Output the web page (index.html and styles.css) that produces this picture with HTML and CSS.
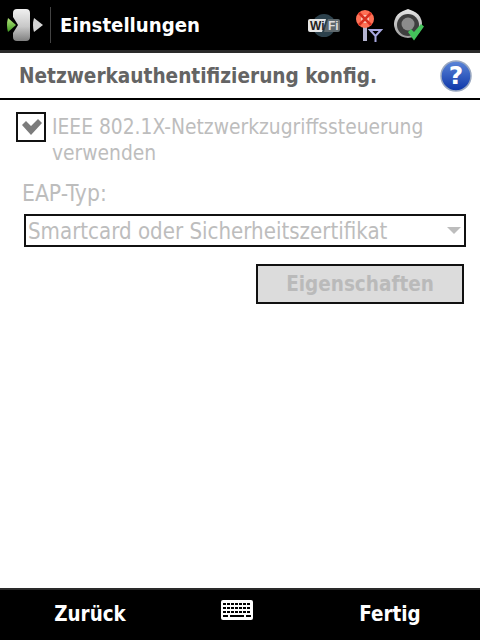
FILE: index.html
```html
<!DOCTYPE html>
<html lang="de">
<head>
<meta charset="utf-8">
<title>Einstellungen</title>
<link rel="stylesheet" href="styles.css">
</head>
<body>
<div class="screen">
  <header class="topbar">
    <svg class="start" width="50" height="50" viewBox="0 0 50 50">
      <defs>
        <linearGradient id="body" x1="0" y1="0" x2="0" y2="1"><stop offset="0" stop-color="#f0f0f0"/><stop offset=".55" stop-color="#c8c8c8"/><stop offset="1" stop-color="#808080"/></linearGradient>
        <linearGradient id="grn" x1="0" y1="0" x2="0" y2="1"><stop offset="0" stop-color="#b4e67c"/><stop offset="1" stop-color="#3f9a20"/></linearGradient>
      </defs>
      <path d="M13 13q0-4 4-4h9q4 0 4 4v24q0 4-4 4h-9q-4 0-4-4v-4l5-8-5-8z" fill="url(#body)"/>
      <path d="M8 18l8 7-8 7q-2-7 0-14z" fill="url(#grn)"/>
      <path d="M34 18l9 7-9 7q-2-7 0-14z" fill="#d4d4d4"/>
    </svg>
    <div class="divider"></div>
    <h1 class="apptitle">Einstellungen</h1>
    <div class="tray">
      <svg class="wifi" width="32" height="23" viewBox="0 0 32 23">
        <circle cx="16" cy="11.500" r="11.500" fill="#2c414c"/>
        <path d="M2 5h16l-4 13H2q-2 0-2-2V7q0-2 2-2z" fill="#e6e6e6"/>
        <path d="M20 5h10q2 0 2 2v9q0 2-2 2H16z" fill="#5e686c"/>
        <text x="2" y="16" class="wifitext dark">Wi</text>
        <text x="20" y="16" class="wifitext light">Fi</text>
      </svg>
      <svg class="net" width="28" height="32" viewBox="0 0 28 32">
        <line x1="10" y1="14" x2="10" y2="31" stroke="#b4b4d0" stroke-width="4"/>
        <circle cx="10" cy="9" r="9" fill="#ff7055"/>
        <circle cx="10" cy="9" r="4" fill="#f9cdbd"/>
        <path d="M4 3l12 12M16 3L4 15" stroke="#d83020" stroke-width="2.500"/>
        <path d="M15 20h11l-5.500 6zM20.500 25v7" fill="none" stroke="#a8a8e0" stroke-width="2"/>
      </svg>
      <svg class="vol" width="32" height="32" viewBox="0 0 32 32">
        <defs><linearGradient id="vo" x1="0" y1="0" x2="0" y2="1"><stop offset="0" stop-color="#e8e8e8"/><stop offset="1" stop-color="#9a9a9a"/></linearGradient></defs>
        <path d="M15 0l5 2a14 14 0 1 1-10 0z" fill="url(#vo)"/>
        <circle cx="15" cy="16" r="11" fill="#3e3e3e"/>
        <circle cx="15" cy="15" r="6.500" fill="#8c8c8c"/>
        <path d="M15 23l3-3 3 3 7-8 3 2.500-10 14z" fill="#43c25a"/>
      </svg>
    </div>
  </header>
  <div class="pagehead">
    <h2 class="pagetitle">Netzwerkauthentifizierung konfig.</h2>
    <svg class="help" width="32" height="32" viewBox="0 0 32 32">
      <defs><linearGradient id="hb" x1="0" y1="0" x2="0" y2="1"><stop offset="0" stop-color="#5c86d8"/><stop offset="1" stop-color="#0c35a8"/></linearGradient></defs>
      <circle cx="16" cy="16" r="15" fill="url(#hb)" stroke="#9aa8c0" stroke-width="1.500"/>
      <text x="16" y="24" class="qmark" text-anchor="middle">?</text>
    </svg>
  </div>
  <main class="content">
    <div class="checkrow">
      <span class="checkbox">
        <svg width="26" height="26" viewBox="0 0 26 26"><path d="M4 11l4-4 5 5 7-7 4 4-11 12z" fill="#7c7c7c"/></svg>
      </span>
      <span class="checklabel">IEEE 802.1X-Netzwerkzugriffssteuerung verwenden</span>
    </div>
    <div class="fieldlabel">EAP-Typ:</div>
    <div class="select">
      <span>Smartcard oder Sicherheitszertifikat</span>
      <i class="arrow"></i>
    </div>
    <div class="btnrow"><button class="btn" disabled>Eigenschaften</button></div>
  </main>
  <footer class="bottombar">
    <span class="softkey left">Zurück</span>
    <svg class="kbd" width="32" height="20" viewBox="0 0 32 20">
      <rect width="32" height="20" rx="2" fill="#fff"/>
      <path d="M2 4h28M2 8h28M2 12h28" stroke="#000" stroke-width="2" stroke-dasharray="3 1"/>
      <path d="M2 16h5M9 16h14M25 16h5" stroke="#000" stroke-width="2"/>
    </svg>
    <span class="softkey right">Fertig</span>
  </footer>
</div>
</body>
</html>
```
FILE: styles.css
```css
* { box-sizing: border-box; }
html, body { margin: 0; padding: 0; }
body { width: 480px; height: 640px; overflow: hidden; background: #fff; font-family: "DejaVu Sans Condensed", "DejaVu Sans", sans-serif; }
.screen { width: 480px; height: 640px; display: flex; flex-direction: column; }
.topbar { height: 53px; flex: none; background: #000; border-bottom: 3px solid #2a2a2a; display: flex; align-items: center; color: #fff; }
.start { flex: none; display: block; width: 50px; }
.divider { width: 1px; height: 36px; background: #444; flex: none; }
.apptitle { margin: 0 0 0 9px; font-size: 20.200px; font-weight: 700; line-height: 50px; }
.tray { margin-left: auto; margin-right: 55px; height: 50px; display: flex; align-items: flex-start; gap: 15px; }
.wifi, .net, .vol { flex: none; display: block; }
.wifi { margin-top: 14px; }
.net { margin-top: 10px; margin-right: -7px; }
.vol { margin-top: 9px; margin-left: 2px; }
.wifitext { font-size: 12px; font-weight: 700; font-family: "Liberation Sans", sans-serif; }
.dark { fill: #222; }
.light { fill: #ddd; }
.pagehead { height: 47px; flex: none; border-bottom: 2px solid #000; display: flex; align-items: center; justify-content: space-between; padding: 0 8px 0 19px; }
.pagetitle { margin: 0; font-size: 20.600px; font-weight: 700; color: #646464; }
.help { display: block; flex: none; }
.qmark { font-size: 25px; font-weight: 700; fill: #fff; font-family: "DejaVu Sans", sans-serif; }
.content { flex: 1; padding: 12px 16px 0 16px; color: #bdbdbd; }
.checkrow { display: flex; align-items: flex-start; gap: 6px; }
.checkbox { width: 30px; height: 30px; flex: none; border: 2px solid #111; display: flex; align-items: center; justify-content: center; }
.checklabel { font-size: 20.800px; line-height: 26px; width: 400px; margin-top: 2px; }
.fieldlabel { font-size: 22.700px; line-height: 26px; margin: 14px 0 0 6px; }
.select { margin: 8px 0 0 8px; height: 33px; width: 442px; border: 2px solid #111; display: flex; align-items: center; justify-content: space-between; padding: 0 2px 0 2px; font-size: 22.100px; }
.arrow { width: 0; height: 0; border-left: 7px solid transparent; border-right: 7px solid transparent; border-top: 7px solid #bdbdbd; margin-right: 1px; }
.btnrow { display: flex; justify-content: flex-end; margin-top: 17px; }
.btn { width: 208px; height: 40px; border: 2px solid #111; background: #dcdcdc; color: #bababa; font: 700 20.500px "DejaVu Sans Condensed", "DejaVu Sans", sans-serif; padding: 0; }
.bottombar { height: 52px; flex: none; background: #000; border-top: 2px solid #2a2a2a; position: relative; display: flex; align-items: center; color: #fff; }
.softkey { font-size: 20.400px; font-weight: 700; width: 180px; text-align: center; margin-top: -2px; }
.left { margin-right: auto; }
.right { margin-left: auto; }
.kbd { position: absolute; left: 221px; top: 10px; }
```
